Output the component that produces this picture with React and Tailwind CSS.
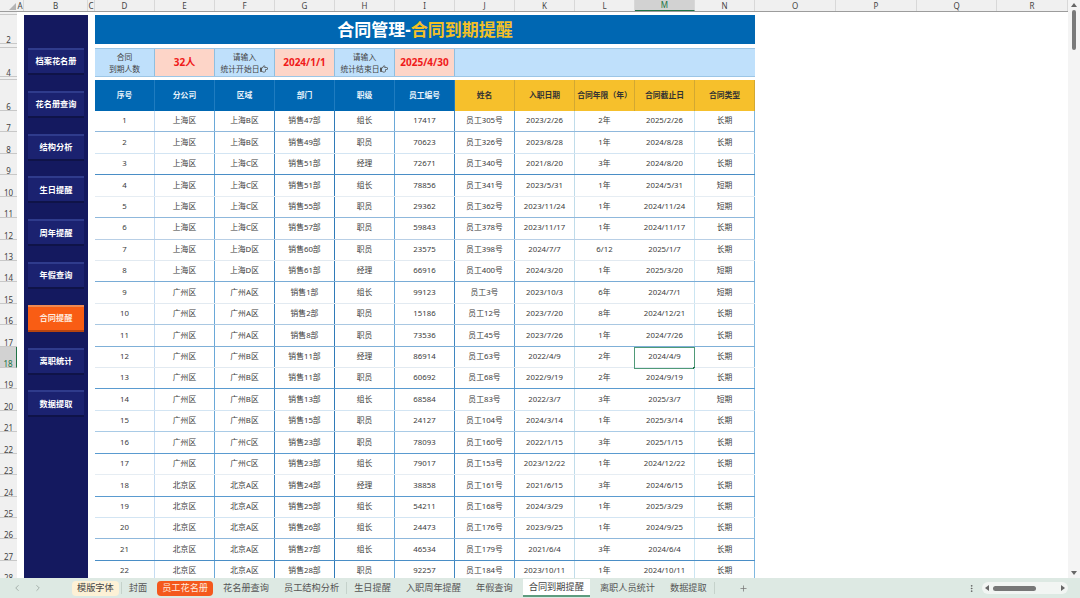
import React from 'react';
import { ChevronLeft, ChevronRight, Plus, EllipsisVertical } from 'lucide-react';
import { FaRegHandPointRight } from 'react-icons/fa';

const columnLetters = [
    { label: 'A', width: 'w-[7px]' },
    { label: 'B', width: 'w-[64px]' },
    { label: 'C', width: 'w-[7px]' },
    { label: 'D', width: 'w-[60px]' },
    { label: 'E', width: 'w-[60px]' },
    { label: 'F', width: 'w-[60px]' },
    { label: 'G', width: 'w-[60px]' },
    { label: 'H', width: 'w-[60px]' },
    { label: 'I', width: 'w-[60px]' },
    { label: 'J', width: 'w-[60px]' },
    { label: 'K', width: 'w-[60px]' },
    { label: 'L', width: 'w-[60px]' },
    { label: 'M', width: 'w-[60px]', selected: true },
    { label: 'N', width: 'w-[60px]' },
    { label: 'O', width: 'w-[81px]' },
    { label: 'P', width: 'w-[81px]' },
    { label: 'Q', width: 'w-[80px]' },
    { label: 'R', width: 'w-[71px]' },
];

const rowLabels = [
    { label: '', height: 'h-[3px]' },
    { label: '2', height: 'h-[29px]' },
    { label: '', height: 'h-[4px]' },
    { label: '4', height: 'h-[29px]' },
    { label: '', height: 'h-[3px]' },
    { label: '6', height: 'h-[31px]' },
    ...Array.from({ length: 22 }, (_, i) => ({ label: String(i + 7), height: 'h-[21.43px]', selected: i + 7 === 18 })),
];

const sideButtons = ['档案花名册', '花名册查询', '结构分析', '生日提醒', '周年提醒', '年假查询', '合同提醒', '离职统计', '数据提取'];

const headers = ['序号', '分公司', '区域', '部门', '职级', '员工编号', '姓名', '入职日期', '合同年限（年）', '合同截止日', '合同类型'];

const rows = [
    ['1', '上海区', '上海B区', '销售47部', '组长', '17417', '员工305号', '2023/2/26', '2年', '2025/2/26', '长期'],
    ['2', '上海区', '上海B区', '销售49部', '职员', '70623', '员工326号', '2023/8/28', '1年', '2024/8/28', '长期'],
    ['3', '上海区', '上海C区', '销售51部', '经理', '72671', '员工340号', '2021/8/20', '3年', '2024/8/20', '长期'],
    ['4', '上海区', '上海C区', '销售51部', '组长', '78856', '员工341号', '2023/5/31', '1年', '2024/5/31', '短期'],
    ['5', '上海区', '上海C区', '销售55部', '职员', '29362', '员工362号', '2023/11/24', '1年', '2024/11/24', '短期'],
    ['6', '上海区', '上海C区', '销售57部', '职员', '59843', '员工378号', '2023/11/17', '1年', '2024/11/17', '长期'],
    ['7', '上海区', '上海D区', '销售60部', '职员', '23575', '员工398号', '2024/7/7', '6/12', '2025/1/7', '长期'],
    ['8', '上海区', '上海D区', '销售61部', '经理', '66916', '员工400号', '2024/3/20', '1年', '2025/3/20', '短期'],
    ['9', '广州区', '广州A区', '销售1部', '组长', '99123', '员工3号', '2023/10/3', '6年', '2024/7/1', '短期'],
    ['10', '广州区', '广州A区', '销售2部', '职员', '15186', '员工12号', '2023/7/20', '8年', '2024/12/21', '长期'],
    ['11', '广州区', '广州A区', '销售8部', '职员', '73536', '员工45号', '2023/7/26', '1年', '2024/7/26', '长期'],
    ['12', '广州区', '广州B区', '销售11部', '经理', '86914', '员工63号', '2022/4/9', '2年', '2024/4/9', '长期'],
    ['13', '广州区', '广州B区', '销售11部', '职员', '60692', '员工68号', '2022/9/19', '2年', '2024/9/19', '长期'],
    ['14', '广州区', '广州B区', '销售13部', '组长', '68584', '员工83号', '2022/3/7', '3年', '2025/3/7', '短期'],
    ['15', '广州区', '广州B区', '销售15部', '职员', '24127', '员工104号', '2024/3/14', '1年', '2025/3/14', '长期'],
    ['16', '广州区', '广州C区', '销售23部', '职员', '78093', '员工160号', '2022/1/15', '3年', '2025/1/15', '长期'],
    ['17', '广州区', '广州C区', '销售23部', '组长', '79017', '员工153号', '2023/12/22', '1年', '2024/12/22', '长期'],
    ['18', '北京区', '北京A区', '销售24部', '经理', '38858', '员工161号', '2021/6/15', '3年', '2024/6/15', '长期'],
    ['19', '北京区', '北京A区', '销售25部', '组长', '54211', '员工168号', '2024/3/29', '1年', '2025/3/29', '长期'],
    ['20', '北京区', '北京A区', '销售26部', '组长', '24473', '员工176号', '2023/9/25', '1年', '2024/9/25', '长期'],
    ['21', '北京区', '北京A区', '销售27部', '组长', '46534', '员工179号', '2021/6/4', '3年', '2024/6/4', '长期'],
    ['22', '北京区', '北京A区', '销售28部', '职员', '92257', '员工184号', '2023/10/11', '1年', '2024/10/11', '长期'],
];

// the row and column rules vary in strength across the sheet
const rowLines = [
    'border-[#8fb8dc]', 'border-[#d3e5f3]', 'border-[#4a8ec6]', 'border-[#e6edf3]', 'border-[#8fb8dc]',
    'border-[#b8cfe6]', 'border-[#e2eaf1]', 'border-[#79acd6]', 'border-[#e2eaf1]', 'border-[#a9c8e2]',
    'border-[#7fb0d8]', 'border-[#e2eaf1]', 'border-[#5a9bd0]', 'border-[#d3e5f3]', 'border-[#a9cbe6]',
    'border-[#5a9bd0]', 'border-[#e6edf3]', 'border-[#5a9bd0]', 'border-[#d3e5f3]', 'border-[#8fb8dc]',
    'border-[#4a8ec6]', 'border-[#d3e5f3]',
];

const colLines = [
    'border-r-[#c5dcf2]', 'border-r-[#6aa8d8]', 'border-r-[#3f86c0]', 'border-r-[#2f7ab8]', 'border-r-[#6aa8d8]',
    'border-r-[#3f86c0]', 'border-r-[#5a9bd0]', 'border-r-[#c0dcea]', 'border-r-transparent', 'border-r-[#cbe5f2]',
    'border-r-[#7fb8e0]',
];

const tabs = [
    { label: '模版字体', className: 'bg-[#fdf1d6] rounded-sm text-[#444]' },
    { separator: true },
    { label: '封面', className: 'text-[#555]' },
    { label: '员工花名册', className: 'bg-[#f4581c] rounded-sm text-[#ffe9dc]' },
    { label: '花名册查询', className: 'text-[#555]' },
    { label: '员工结构分析', className: 'text-[#555]' },
    { separator: true },
    { label: '生日提醒', className: 'text-[#555]' },
    { label: '入职周年提醒', className: 'text-[#555]' },
    { label: '年假查询', className: 'text-[#555]' },
    { label: '合同到期提醒', active: true },
    { label: '离职人员统计', className: 'text-[#555]' },
    { label: '数据提取', className: 'text-[#555]' },
    { separator: true },
];

const InfoLabel = ({ top, bottom, hand }) => (
    <div className="w-[60px] h-full flex-none flex flex-col items-center justify-center bg-[#bfe0fb] border-r border-[#8fbfe0] text-[7.8px] leading-[12px] text-[#444]">
        <span>{top}</span>
        <span className="flex items-center gap-[1px]">
            {bottom}
            {hand && <FaRegHandPointRight className="w-[8px] h-[8px] text-[#555]" />}
        </span>
    </div>
);

const InfoValue = ({ children }) => (
    <div className="w-[60px] h-full flex-none flex items-center justify-center bg-[#fdd5c8] border-r border-[#8fbfe0] text-[10px] font-bold text-[#f01a1a]">
        {children}
    </div>
);

const App = () => {
    return (
        <div className="w-[1080px] h-[598px] flex flex-col overflow-hidden bg-white font-['Noto_Sans','Noto_Sans_CJK_SC',sans-serif]">
            <div className="flex flex-1 min-h-0">
                <div className="flex-1 min-w-0 flex flex-col">
                    {/* column letters */}
                    <div className="h-[12px] flex flex-none bg-[#f0f0f0] border-b border-[#9c9c9c]">
                        <div className="w-[17px] flex-none flex items-end justify-end pr-[1px] pb-[1px]">
                            <div className="w-0 h-0 border-l-[7px] border-l-transparent border-b-[7px] border-b-[#b4b4b4]" />
                        </div>
                        {columnLetters.map((col) => (
                            <div
                                key={col.label}
                                className={`${col.width} flex-none flex items-center justify-center border-r border-[#d8d8d8] text-[8px] leading-none ${col.selected ? 'bg-[#d2d2d2] text-[#217346] border-b border-b-[#217346]' : 'text-[#444]'}`}
                            >
                                {col.label}
                            </div>
                        ))}
                    </div>

                    <div className="flex flex-1 min-h-0 overflow-hidden">
                        {/* row numbers */}
                        <div className="w-[17px] flex-none flex flex-col bg-[#f0f0f0]">
                            {rowLabels.map((row, i) => (
                                <div
                                    key={i}
                                    className={`${row.height} flex-none flex items-end justify-center overflow-hidden border-b border-[#c8c8c8] text-[8px] leading-[7px] ${row.selected ? 'bg-[#d2d2d2] text-[#217346] border-r border-r-[#217346]' : 'text-[#444]'}`}
                                >
                                    {row.label}
                                </div>
                            ))}
                        </div>
                        <div className="w-[7px] flex-none" />

                        {/* navigation column */}
                        <div className="w-[64px] flex-none mt-[3px] pt-[33px] flex flex-col items-center gap-[15.8px] bg-[#14195f]">
                            {sideButtons.map((name) => (
                                <div
                                    key={name}
                                    className={`w-[56px] h-[27px] flex-none flex items-center justify-center border-t-2 border-b-2 text-[8.2px] font-bold ${name === '合同提醒' ? 'bg-[#f95d14] border-t-[#f08850] border-b-[#b8450f] text-[#ffe9dc]' : 'bg-[#1b2270] border-t-[#2f3b8c] border-b-[#0f1348] text-white'}`}
                                >
                                    {name}
                                </div>
                            ))}
                        </div>
                        <div className="w-[7px] flex-none" />

                        {/* main sheet */}
                        <div className="w-[660px] flex-none pt-[3px] flex flex-col">
                            <div className="h-[29px] flex-none flex items-center justify-center bg-[#0067b2] text-[17px] font-bold leading-none">
                                <span className="text-white">合同管理-</span>
                                <span className="text-[#f3c026]">合同到期提醒</span>
                            </div>

                            <div className="h-[29px] flex-none mt-[4px] flex border-y border-[#9cc6e6]">
                                <InfoLabel top="合同" bottom="到期人数" />
                                <InfoValue>32人</InfoValue>
                                <InfoLabel top="请输入" bottom="统计开始日" hand />
                                <InfoValue>2024/1/1</InfoValue>
                                <InfoLabel top="请输入" bottom="统计结束日" hand />
                                <InfoValue>2025/4/30</InfoValue>
                                <div className="flex-1 bg-[#bfe0fb]" />
                            </div>

                            <div className="h-[31px] flex-none mt-[3px] flex">
                                {headers.map((title, i) => (
                                    <div
                                        key={title}
                                        className={`w-[60px] flex-none flex items-center justify-center border-r text-[7.8px] font-bold whitespace-nowrap ${i < 6 ? 'bg-[#0067b2] border-[#1f7cc0] text-[#e8f3fb]' : 'bg-[#f6c02c] border-[#d2a832] text-[#333]'}`}
                                    >
                                        {title}
                                    </div>
                                ))}
                            </div>

                            {rows.map((row, r) => (
                                <div key={row[0]} className={`h-[21.43px] flex-none flex border-b ${rowLines[r]}`}>
                                    {row.map((value, c) => (
                                        <div
                                            key={c}
                                            className={`relative w-[60px] flex-none flex items-center justify-center border-r ${colLines[c]} text-[7.8px] text-[#3c3c3c] whitespace-nowrap`}
                                        >
                                            {value}
                                            {r === 11 && c === 9 && (
                                                <div className="absolute -left-px top-0 w-[61px] h-[22px] border border-[#4f9a78]">
                                                    <div className="absolute -right-px -bottom-px w-[2px] h-[2px] bg-[#217346]" />
                                                </div>
                                            )}
                                        </div>
                                    ))}
                                </div>
                            ))}
                        </div>
                    </div>
                </div>

                {/* vertical scrollbar */}
                <div className="w-[12px] flex-none flex flex-col items-center justify-between bg-[#f4f4f4] pt-[3px] pb-[3px] pr-[1px]">
                    <div className="flex flex-col items-center gap-[3px]">
                        <div className="w-0 h-0 border-x-[3px] border-x-transparent border-b-[4px] border-b-[#666]" />
                        <div className="w-[4px] h-[40px] rounded-full bg-[#7a7a7a]" />
                    </div>
                    <div className="w-0 h-0 border-x-[3px] border-x-transparent border-t-[4px] border-t-[#666]" />
                </div>
            </div>

            {/* sheet tabs */}
            <div className="h-[20px] flex-none flex items-center bg-[#dde9e3] text-[9.2px] whitespace-nowrap">
                <div className="w-[72px] flex-none flex items-center pl-[12px] gap-[11px] text-[#9aa5a0]">
                    <ChevronLeft size={10} />
                    <ChevronRight size={10} />
                </div>
                <div className="flex items-center gap-[5px]">
                    {tabs.map((tab, i) =>
                        tab.separator ? (
                            <div key={i} className="w-px h-[12px] -mx-[3px] bg-[#c5d2cb]" />
                        ) : tab.active ? (
                            <div key={i} className="h-[18px] mt-[-1px] px-[6px] flex items-center bg-white border-b-2 border-[#5e9c7f] text-[#444]">
                                {tab.label}
                            </div>
                        ) : (
                            <div key={i} className={`h-[15px] px-[5px] flex items-center ${tab.className}`}>
                                {tab.label}
                            </div>
                        )
                    )}
                </div>
                <Plus size={9} className="ml-[27px] text-[#777]" />
                <div className="ml-auto flex items-center pr-[12px]">
                    <EllipsisVertical size={9} className="mr-[6px] text-[#555]" />
                    <div className="w-[86px] h-[12px] flex items-center px-[3px] rounded-full bg-[#f2f5f3]">
                        <div className="w-0 h-0 border-y-[3px] border-y-transparent border-r-[4px] border-r-[#666]" />
                        <div className="w-[43px] h-[5px] ml-[4px] rounded-full bg-[#777]" />
                        <div className="ml-auto w-0 h-0 border-y-[3px] border-y-transparent border-l-[4px] border-l-[#666]" />
                    </div>
                </div>
            </div>
        </div>
    );
};

export default App;
